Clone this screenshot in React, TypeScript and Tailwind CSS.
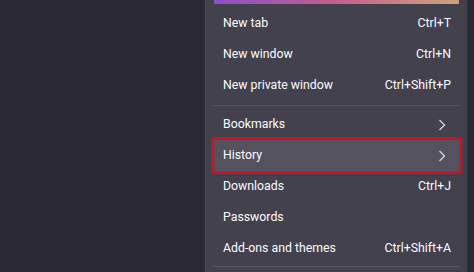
const rows1 = [
  { label: "New tab", key: "Ctrl+T" },
  { label: "New window", key: "Ctrl+N" },
  { label: "New private window", key: "Ctrl+Shift+P" },
];

const rows2 = [
  { label: "Bookmarks", arrow: true },
  { label: "History", arrow: true, active: true },
  { label: "Downloads", key: "Ctrl+J" },
  { label: "Passwords" },
  { label: "Add-ons and themes", key: "Ctrl+Shift+A" },
];

type Row = { label: string; key?: string; arrow?: boolean; active?: boolean };

function Chevron() {
  return (
    <svg width="8" height="12" viewBox="0 0 8 12" fill="none">
      <path d="M1.5 1 L6.5 6 L1.5 11" stroke="#d6d6dc" strokeWidth="1.3" />
    </svg>
  );
}

function MenuRow({ row }: { row: Row }) {
  return (
    <div
      className={
        "mx-2 flex h-[31px] items-center justify-between pl-[9px] pr-[8px] " +
        (row.active ? "bg-[#53525e] ring-[3px] ring-[#cc1420] rounded-[1px]" : "")
      }
    >
      <span>{row.label}</span>
      {row.key && <span>{row.key}</span>}
      {row.arrow && (
        <span className="pr-[5px]">
          <Chevron />
        </span>
      )}
    </div>
  );
}

export default function App() {
  return (
    <div
      className="flex h-[272px] w-[474px] overflow-hidden bg-[#2b2a33] text-[12.3px] text-[#fbfbfe]"
      style={{ fontFamily: 'Roboto, "Open Sans", sans-serif' }}
    >
      <div className="w-[205px] shrink-0" />
      <div className="flex w-[262px] shrink-0 flex-col border-l border-[#4f4e5a] bg-[#42414d]">
        <div className="mx-[8px] h-[4px] bg-gradient-to-r from-[#8a4fc4] via-[#c25f8c] to-[#caa27e]" />
        <div className="pt-[4px]">
          {rows1.map((r) => (
            <MenuRow key={r.label} row={r} />
          ))}
        </div>
        <div className="mx-[7px] mt-[4px] mb-[3px] h-px bg-[#56555f]" />
        <div>
          {rows2.map((r) => (
            <MenuRow key={r.label} row={r} />
          ))}
        </div>
        <div className="mx-[7px] mt-[2px] h-px bg-[#56555f]" />
      </div>
      <div className="flex-1 bg-[#2b2a33]" />
    </div>
  );
}
